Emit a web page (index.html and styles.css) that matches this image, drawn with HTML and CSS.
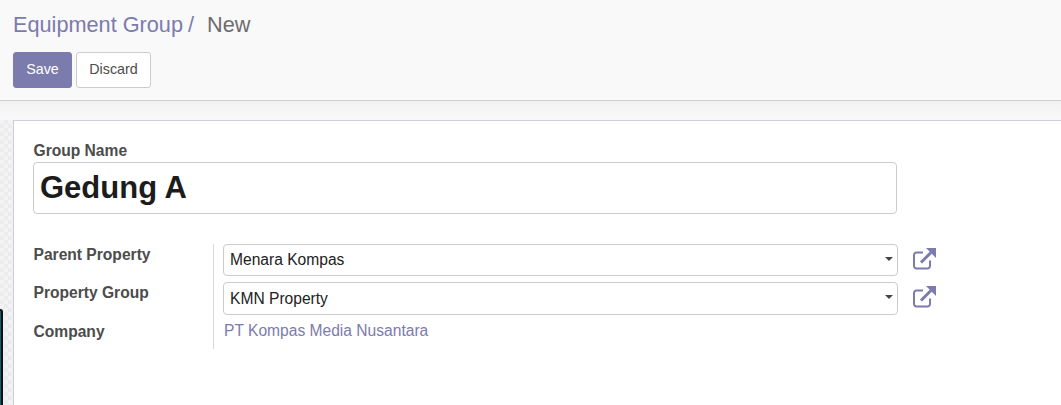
FILE: index.html
```html
<!DOCTYPE html>
<html lang="en">
<head>
  <meta charset="UTF-8">
  <title>Equipment Group</title>
  <link rel="stylesheet" href="styles.css">
</head>
<body>
  <div class="control-panel">
    <div class="breadcrumb">
      <a href="#">Equipment Group</a><span class="slash">/</span><span class="current">New</span>
    </div>
    <div class="buttons">
      <button type="button" class="btn btn-primary">Save</button>
      <button type="button" class="btn btn-secondary">Discard</button>
    </div>
  </div>

  <div class="content">
    <div class="side-strip">
      <div class="dark-window"></div>
    </div>
    <div class="sheet">
      <label class="title-label">Group Name</label>
      <div class="title-input">Gedung A</div>

      <div class="form-group">
        <div class="labels">
          <div class="label-row row-one">Parent Property</div>
          <div class="label-row row-two">Property Group</div>
          <div class="label-row row-three">Company</div>
        </div>
        <div class="fields">
          <div class="field-row">
            <div class="select">Menara Kompas<span class="caret"></span></div>
            <svg class="open-icon" viewBox="0 0 24 24" width="24" height="24">
              <path d="M18 13.5v5.5a2.5 2.5 0 0 1-2.5 2.5H4.5A2.5 2.5 0 0 1 2 19V8a2.5 2.5 0 0 1 2.5-2.5H11" fill="none" stroke="#7c7bad" stroke-width="2"/>
              <path d="M9 15.5 19 5.5" fill="none" stroke="#7c7bad" stroke-width="3"/>
              <path d="M14 1h10v10z" fill="#7c7bad"/>
            </svg>
          </div>
          <div class="field-row">
            <div class="select">KMN Property<span class="caret"></span></div>
            <svg class="open-icon" viewBox="0 0 24 24" width="24" height="24">
              <path d="M18 13.5v5.5a2.5 2.5 0 0 1-2.5 2.5H4.5A2.5 2.5 0 0 1 2 19V8a2.5 2.5 0 0 1 2.5-2.5H11" fill="none" stroke="#7c7bad" stroke-width="2"/>
              <path d="M9 15.5 19 5.5" fill="none" stroke="#7c7bad" stroke-width="3"/>
              <path d="M14 1h10v10z" fill="#7c7bad"/>
            </svg>
          </div>
          <a href="#" class="company-link">PT Kompas Media Nusantara</a>
        </div>
      </div>
    </div>
  </div>
</body>
</html>
```

FILE: styles.css
```css
html, body {
  margin: 0;
  padding: 0;
  height: 405px;
  overflow: hidden;
}

body {
  font-family: "Liberation Sans", Arial, sans-serif;
  font-size: 15.6px;
  color: #4c4c4c;
  background-color: #f8f8f8;
}

a {
  color: #7c7bad;
  text-decoration: none;
}

.control-panel {
  height: 101px;
  box-sizing: border-box;
  padding: 12px 13px 0;
  background-color: #f9f9f9;
  border-bottom: 1px solid #cfcfcf;
}

.breadcrumb {
  font-size: 21.7px;
  line-height: 26px;
  color: #6c6c6c;
}

.slash {
  color: #7c7bad;
  margin-left: 5px;
  margin-right: 13px;
}

.buttons {
  display: flex;
  gap: 4px;
  margin-top: 14px;
}

.btn {
  height: 36px;
  padding: 0 0 2px;
  font-family: inherit;
  font-size: 14.3px;
  border-radius: 3px;
  cursor: pointer;
}

.btn-primary {
  width: 59px;
  color: #fff;
  background-color: #7c7bad;
  border: 1px solid #7c7bad;
}

.btn-secondary {
  width: 75px;
  color: #4c4c4c;
  background-color: #fff;
  border: 1px solid #ccc;
}

.content {
  display: flex;
  height: 304px;
  padding-top: 19px;
  box-sizing: border-box;
  background: linear-gradient(#f2f2f2, #f8f8f8 16px);
}

.side-strip {
  position: relative;
  width: 13px;
  background-color: #f3f3f3;
  background-image: conic-gradient(#ececec 25%, transparent 0 50%, #ececec 0 75%, transparent 0);
  background-size: 8px 8px;
}

.dark-window {
  position: absolute;
  left: 0;
  top: 189px;
  width: 3px;
  height: 96px;
  box-sizing: border-box;
  background-color: #0b5f7e;
  border-top: 2px solid #111;
  border-right: 2px solid #111;
  border-top-right-radius: 4px;
}

.sheet {
  flex: 1;
  box-sizing: border-box;
  padding: 21px 19px 0;
  background-color: #fff;
  border-top: 1px solid #cfcde0;
  border-left: 1px solid #cfcde0;
}

.title-label {
  display: block;
  padding-left: 0.5px;
  font-weight: bold;
  line-height: 18px;
}

.title-input {
  width: 864px;
  height: 52px;
  box-sizing: border-box;
  margin-top: 2px;
  padding-left: 6px;
  font-size: 31px;
  font-weight: bold;
  line-height: 50px;
  color: #1c1c1c;
  border: 1px solid #ccc;
  border-radius: 4px;
}

.form-group {
  display: flex;
  margin-top: 30px;
}

.labels {
  width: 180px;
  height: 105px;
  border-right: 1px solid #d9d9d9;
  font-weight: bold;
}

.label-row {
  padding-left: 0.5px;
  line-height: 18px;
}

.row-one {
  padding-top: 2px;
}

.row-two {
  margin-top: 20px;
}

.row-three {
  margin-top: 21px;
}

.fields {
  padding-left: 9px;
}

.field-row {
  display: flex;
  gap: 14px;
  margin-bottom: 6px;
}

.select {
  position: relative;
  width: 675px;
  height: 32px;
  box-sizing: border-box;
  padding-left: 6px;
  line-height: 30px;
  color: #222;
  border: 1px solid #ccc;
  border-radius: 4px;
}

.field-row + .field-row .select {
  height: 33px;
  line-height: 31px;
}

.open-icon {
  margin-top: 3px;
}

.caret {
  position: absolute;
  right: 4px;
  top: 12px;
  border-top: 4px solid #444;
  border-left: 4px solid transparent;
  border-right: 4px solid transparent;
}

.company-link {
  display: block;
  padding-left: 1px;
  line-height: 20px;
  margin-top: 3px;
}
```
